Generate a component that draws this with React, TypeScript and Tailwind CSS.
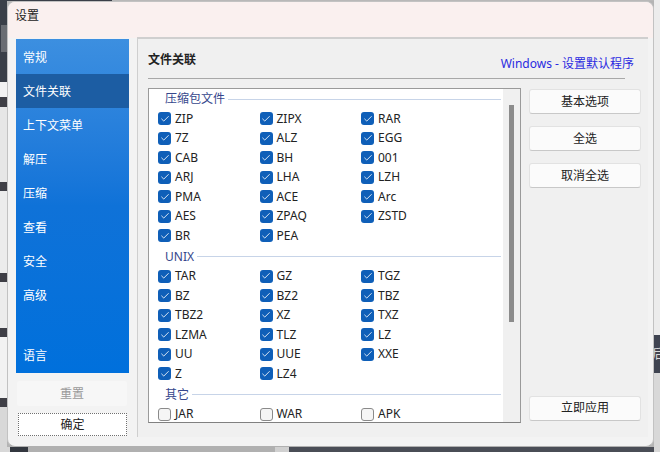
import { Check } from "lucide-react";

const FONT = "font-['Noto_Sans','Noto_Sans_CJK_SC',sans-serif]";

const nav = ["常规", "文件关联", "上下文菜单", "解压", "压缩", "查看", "安全", "高级"];

type Item = { name: string; on: boolean };
const on = (s: string): Item[] => s.split(" ").map((name) => ({ name, on: true }));
const off = (s: string): Item[] => s.split(" ").map((name) => ({ name, on: false }));

const groups: { title: string; items: Item[] }[] = [
  { title: "压缩包文件", items: on("ZIP ZIPX RAR 7Z ALZ EGG CAB BH 001 ARJ LHA LZH PMA ACE Arc AES ZPAQ ZSTD BR PEA") },
  { title: "UNIX", items: on("TAR GZ TGZ BZ BZ2 TBZ TBZ2 XZ TXZ LZMA TLZ LZ UU UUE XXE Z LZ4") },
  { title: "其它", items: off("JAR WAR APK") },
];

function Box({ item }: { item: Item }) {
  return (
    <div className="flex items-center h-[19.5px] gap-[4px]">
      {item.on ? (
        <span className="flex items-center justify-center w-[13px] h-[13px] rounded-[3px] bg-[#0f5fb8]">
          <Check size={10} strokeWidth={2} className="text-white" />
        </span>
      ) : (
        <span className="w-[13px] h-[13px] rounded-[3px] bg-[#f5f5f5] border border-[#8a8a8a]" />
      )}
      <span className="text-[12px] leading-none text-[#222]">{item.name}</span>
    </div>
  );
}

function Btn({ label }: { label: string }) {
  return (
    <button className="w-[112px] h-[25px] bg-[#fbfbfb] border border-[#e2e2e2] border-b-[#c8c8c8] rounded-[3px] text-[12px] text-[#222]">
      {label}
    </button>
  );
}

export default function App() {
  return (
    <div className={`relative w-[660px] h-[452px] overflow-hidden flex bg-[#b4b4b4] ${FONT}`}>
      <div className="w-[7px] flex flex-col shrink-0">
        <div className="h-[82px] bg-[#3a3f48] pt-[25px] pl-[1px]">
          <div className="h-[27px] bg-[#6a6d73]" />
        </div>
        <div className="h-[15px] bg-[#f2f2f2]" />
        <div className="h-[10px] bg-[#3f3f46]" />
        <div className="h-[75px] bg-[#e6e6e6]" />
        <div className="h-[9px] bg-[#3f3f46]" />
        <div className="h-[82px] bg-[#ececec]" />
        <div className="h-[9px] bg-[#3f3f46]" />
        <div className="h-[46px] bg-[#ececec]" />
        <div className="h-[9px] bg-[#3f3f46]" />
        <div className="h-[61px] bg-[#f2f2f2]" />
        <div className="h-[9px] bg-[#3f3f46]" />
        <div className="flex-1 bg-[#d8d8d8]" />
      </div>
      <div className="flex-1 flex flex-col justify-between">
        <div className="h-[1px] flex">
          <div className="w-[105px] bg-[#3a3f48]" />
          <div className="flex-1 bg-[#b8b8b8]" />
        </div>
        <div className="h-[5px] flex">
          <div className="w-[3px] bg-[#d8d8d8]" />
          <div className="w-[18px] bg-[#33373f]" />
          <div className="w-[247px] bg-[#b0b0b0]" />
          <div className="w-[14px] bg-[#d0d0d0]" />
          <div className="flex-1 bg-[#4a4d56]" />
        </div>
      </div>
      <div className="w-[6px] flex flex-col shrink-0">
        <div className="h-[335px] bg-[#ececec]" />
        <div className="h-[38px] bg-[#3f4451] flex items-center text-[13px] text-[#ddd] overflow-hidden">
          <span className="-ml-[2px]">后</span>
        </div>
        <div className="flex-1 bg-[#d8d8d8]" />
      </div>

      {/* dialog */}
      <div className="absolute left-[7px] top-[1px] w-[647px] h-[446px] flex flex-col rounded-[8px] border border-[#c2c2c2] border-b-[#b0b0b0] bg-[#f3f3f3] overflow-hidden">
        <div className="h-[36px] shrink-0 bg-[#faf0ef] flex items-center pl-[7px] pb-[13px] pt-[4px] text-[12px] text-[#222]">
          设置
        </div>
        <div className="flex-1 flex pl-[8px] pr-[5px] pb-[9px] gap-[8px] min-h-0">
          {/* left */}
          <div className="w-[113px] shrink-0 flex flex-col mt-[1px]">
            <div className="h-[334px] flex flex-col pt-[1px] bg-gradient-to-b from-[#3c8fe0] via-[#0f72d8] to-[#0070dc] text-white text-[12px]">
              {nav.map((n) => (
                <div
                  key={n}
                  className={`h-[34px] shrink-0 flex items-center pl-[7px] pt-[2px] ${n === "文件关联" ? "bg-[#1c5da3]" : ""}`}
                >
                  {n}
                </div>
              ))}
              <div className="mt-auto h-[36px] flex items-center pl-[7px] pt-[1px]">语言</div>
            </div>
            <button className="mt-[8px] ml-[1px] w-[110px] h-[25px] bg-[#f7f7f7] rounded-[2px] text-[12px] text-[#9a9a9a]">
              重置
            </button>
            <button className="mt-[7px] ml-[2px] w-[109px] h-[23px] bg-white border border-dotted border-[#707070] text-[12px] text-[#222]">
              确定
            </button>
          </div>

          {/* panel */}
          <div className="flex-1 min-w-0 flex flex-col border-t-2 border-l border-[#cfcfcf] bg-[#f0f0f0] pl-[10px] pr-[7px] -mt-[1px]">
            <div className="h-[40px] shrink-0 mr-[16px] flex justify-between border-b border-[#a8a8a8]">
              <span className="text-[12px] font-bold text-[#222] mt-[12px]">文件关联</span>
              <span className="text-[12px] text-[#2a2ae0] mt-[16px] mr-[-9px]">Windows - 设置默认程序</span>
            </div>
            <div className="flex-1 min-h-0 flex gap-[8px] mt-[9px] pb-[7px]">
              <div className="w-[373px] h-[335px] shrink-0 flex border border-[#9a9a9a] border-b-[#808080] bg-white overflow-hidden">
                <div className="flex-1 pl-[9px] pr-[2px] overflow-hidden">
                  {groups.map((g) => (
                    <div key={g.title}>
                      <div className="flex items-center h-[20px] pl-[7px] gap-[3px]">
                        <span className="text-[12px] leading-none text-[#36478c]">{g.title}</span>
                        <span className="flex-1 h-px bg-[#c7d4e8]" />
                      </div>
                      <div className="grid grid-cols-[101.5px_101.5px_1fr] pb-[1px]">
                        {g.items.map((it) => (
                          <Box key={it.name} item={it} />
                        ))}
                      </div>
                    </div>
                  ))}
                </div>
                <div className="w-[17px] shrink-0 bg-[#f0f0f0] flex justify-center pt-[16px]">
                  <div className="w-[5px] h-[217px] bg-[#8c8c8c]" />
                </div>
              </div>
              <div className="flex flex-col pt-[1px]">
                <div className="flex flex-col gap-[12px]">
                  <Btn label="基本选项" />
                  <Btn label="全选" />
                  <Btn label="取消全选" />
                </div>
                <div className="mt-[206px]">
                  <Btn label="立即应用" />
                </div>
              </div>
            </div>
          </div>
        </div>
      </div>
    </div>
  );
}
